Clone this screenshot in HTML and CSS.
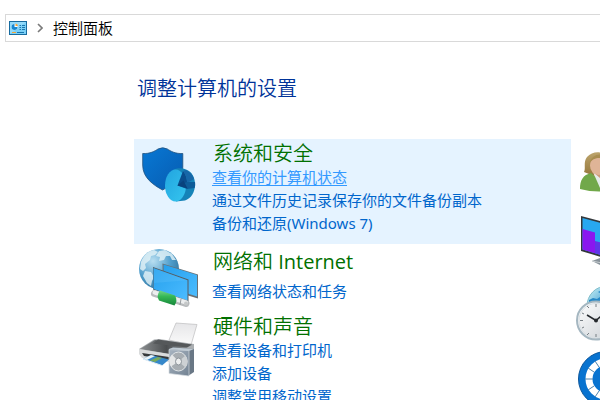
FILE: index.html
```html
<!DOCTYPE html>
<html lang="zh-CN">
<head>
<meta charset="utf-8">
<meta name="viewport" content="width=device-width, initial-scale=1">
<title>控制面板</title>
<link rel="stylesheet" href="styles.css">
</head>
<body>
<nav class="address-bar">
  <svg class="address-icon" viewBox="0 0 18 14" aria-hidden="true">
    <rect x=".5" y=".5" width="17" height="13" fill="#7bd0f7" stroke="#176b9f"/>
    <path d="M1 13V1h16z" fill="#a3e1fc" opacity=".6"/>
    <circle cx="5.500" cy="6" r="3" fill="#fff"/>
    <path d="M5.500 3v3h3a3 3 0 1 1-3-3z" fill="#1687d0"/>
    <path d="M6.500 5V2.500A3 3 0 0 1 9 5z" fill="#f3a536"/>
    <path d="M10.500 4.500H12M13 4.500h3M10.500 6.500H12M13 6.500h3M10.500 8.500H12M13 8.500h3" stroke="#1976ae"/>
    <path d="M3 11.500h4" stroke="#f3a536"/>
    <path d="M8 11.500h7" stroke="#1976ae"/>
  </svg>
  <svg class="chevron" viewBox="0 0 6 10" aria-hidden="true"><path d="M1 1l4 4-4 4" fill="none" stroke="#7a7a7a" stroke-width="1.600"/></svg>
  <span>控制面板</span>
</nav>
<main class="panel">
  <h1 class="title">调整计算机的设置</h1>
  <div class="columns">
    <div class="primary">
      <section class="category is-active">
        <svg class="icon" viewBox="0 0 64 64" aria-hidden="true">
          <defs>
            <linearGradient id="shield" x1="0" y1="0" x2="1" y2="1"><stop offset="0" stop-color="#0878d4"/><stop offset="1" stop-color="#075bb0"/></linearGradient>
            <linearGradient id="pie" x1="0" y1="0" x2="1" y2="1"><stop offset="0" stop-color="#22a4df"/><stop offset="1" stop-color="#35c5ef"/></linearGradient>
          </defs>
          <path d="M4.700 10.500C12 11 17 8 20 6q4.700-2.500 9.400 0c3 2 8 5 15.400 4.500V24c0 12-11 18-20.200 23C15.500 42 4.700 35 4.700 22z" fill="url(#shield)" stroke="#23527c" stroke-width=".8"/>
          <path d="M36 26.500c4-2 9-1.500 12 0 6 2 9 8 9 15 0 8-4 14-10 16l-9 1z" fill="#1583b8"/>
          <ellipse cx="37.500" cy="42.500" rx="10.500" ry="16" fill="url(#pie)"/>
          <path d="M39.500 42.500L45 28c2 2 3.500 6 4 10l.5 6z" fill="#0a4d8c"/>
          <path d="M45 28l3-1c4 2 7 5 8 9l-7 4c0-4-1-8-4-12z" fill="#1767a8"/>
          <path d="M39.500 42.500L49 39l8 0c.5 3 0 5-.5 6L49 46z" fill="#0d5c99"/>
          <path d="M39.500 42.500l6-5 4 8z" fill="#08427d"/>
        </svg>
        <div class="category-text">
          <h2>系统和安全</h2>
          <ul>
            <li><a class="hovered" href="#status">查看你的计算机状态</a></li>
            <li><a href="#history">通过文件历史记录保存你的文件备份副本</a></li>
            <li><a href="#backup">备份和还原(Windows 7)</a></li>
          </ul>
        </div>
      </section>
      <section class="category network">
        <svg class="icon" viewBox="0 0 64 64" aria-hidden="true">
          <defs>
            <radialGradient id="globe" cx=".35" cy=".3" r=".75"><stop offset="0" stop-color="#b9dff1"/><stop offset=".6" stop-color="#4f9dcb"/><stop offset="1" stop-color="#34769f"/></radialGradient>
            <linearGradient id="screen" x1="0" y1="0" x2="1" y2="1"><stop offset="0" stop-color="#26a0ed"/><stop offset="1" stop-color="#4bbcff"/></linearGradient>
            <linearGradient id="pipe" x1="0" y1="0" x2="0" y2="1"><stop offset="0" stop-color="#72d48a"/><stop offset=".4" stop-color="#36b855"/><stop offset="1" stop-color="#16863a"/></linearGradient>
          </defs>
          <circle cx="21" cy="23" r="20" fill="url(#globe)"/>
          <path d="M3 16C6 9 10 5 16 4l4 2-3 3-4 1-1 4-5 4 1 4-3 3-3-2zM21 5l6-1 7 4 4 6-4 0-2-4-4 0-2 4-5 1 1-4-4-1zM7 25l6 1 3 5-2 4-1 5-4-3-4-7z" fill="#e2f1f6" opacity=".82"/>
          <path d="M24.500 17.500L60 28.500v24l-10-3-25-8z" fill="#6a7175"/>
          <path d="M25.500 18.500l33.500 10.500v21.500L26 40z" fill="url(#screen)"/>
          <path d="M15 21l35.500 12.500v22.500L15 43.500z" fill="#565c60"/>
          <path d="M15.500 22l34 12.200v20.300L15.500 43z" fill="url(#screen)"/>
          <path d="M15.500 22l34 12.200L16 37z" fill="#6bc7fa" opacity=".25"/>
          <path d="M16.500 47.500L48 57.500" stroke="#b8bbbd" stroke-width="7" stroke-linecap="round"/>
          <path d="M16.500 46.500L48 56.500" stroke="#eceeef" stroke-width="4" stroke-linecap="round"/>
          <path d="M22 44.500l15 5q3 5-.5 10L21 54.500q-3-5 1-10z" fill="url(#pipe)"/>
          <path d="M43 53l-1 6" stroke="#969b9e"/>
          <circle cx="48" cy="57.500" r="2" fill="#c5c8c9"/>
        </svg>
        <div class="category-text">
          <h2>网络和 <span class="latin">Internet</span></h2>
          <ul>
            <li><a href="#network">查看网络状态和任务</a></li>
          </ul>
        </div>
      </section>
      <section class="category">
        <svg class="icon" viewBox="0 2 64 64" aria-hidden="true">
          <defs>
            <linearGradient id="paper" x1="0" y1="0" x2="0" y2="1"><stop offset="0" stop-color="#e6e6e8"/><stop offset="1" stop-color="#fafafa"/></linearGradient>
            <linearGradient id="printer" x1="0" y1="0" x2="1" y2="0"><stop offset="0" stop-color="#8b8e90"/><stop offset=".5" stop-color="#4b4e50"/><stop offset="1" stop-color="#a1a5a8"/></linearGradient>
            <linearGradient id="speaker" x1="0" y1="0" x2="1" y2="1"><stop offset="0" stop-color="#a7b4c1"/><stop offset="1" stop-color="#738292"/></linearGradient>
          </defs>
          <path d="M38 9l21 1.500L53 31 31 26z" fill="url(#paper)" stroke="#bdbdbf" stroke-width=".7"/>
          <path d="M1 35L16 25.500l5-.5L56 30v5L31 43 1 39z" fill="#abafb2"/>
          <path d="M2 35l15-9 38 5-23 9z" fill="url(#printer)"/>
          <path d="M15 29.500l5-4 34 5-5 3z" fill="#55585a"/>
          <path d="M1 35l30 5V48l-27-4-3-4z" fill="#d9dbdc"/>
          <path d="M4 39l27 4V46L6 42z" fill="#35393b"/>
          <path d="M5 45l8-4 18 4.500-7 6z" fill="#3688ca"/>
          <path d="M5 45l8-4 4 1-8 4z" fill="#ebf4f8"/>
          <path d="M12 46.500l8-3.500 4 1-7 4z" fill="#79aa5c"/>
          <path d="M5 45l19 6.500" stroke="#e0edf5"/>
          <path d="M31 35l4-1.500L56 35v23l-6 4z" fill="#697785"/>
          <path d="M31 35.500l20 1V62l-20-2.500z" fill="url(#speaker)" stroke="#d8dee3" stroke-width=".7"/>
          <path d="M31 35l4-1.500L56 35l-5 2z" fill="#c0cbd4"/>
          <ellipse cx="40.500" cy="47.500" rx="8.500" ry="9.500" fill="#a7adb2" stroke="#e1e5e7"/>
          <path d="M40.500 47.500L34 40.500a9 9 0 0 0-1 12z" fill="#e4e6e7"/>
          <path d="M40.500 47.500l7-6a9 9 0 0 1 0 12z" fill="#cdd1d4"/>
          <ellipse cx="40.500" cy="47.500" rx="3" ry="3.500" fill="#eceeef" stroke="#8c9399"/>
        </svg>
        <div class="category-text">
          <h2>硬件和声音</h2>
          <ul>
            <li><a href="#devices">查看设备和打印机</a></li>
            <li><a href="#add-device">添加设备</a></li>
            <li><a href="#mobility">调整常用移动设置</a></li>
          </ul>
        </div>
      </section>
    </div>
    <div class="secondary">
      <svg class="icon" viewBox="0 0 64 64" aria-hidden="true">
        <defs><linearGradient id="hair" x1="0" y1="0" x2="0" y2="1"><stop offset="0" stop-color="#bca46c"/><stop offset="1" stop-color="#927338"/></linearGradient></defs>
        <path d="M9 29c2-4-1-10 3-15C17 8 26 8 31 12c6 5 3 13 7 17L24 35z" fill="url(#hair)"/>
        <path d="M19 27h12v11H19z" fill="#cc9a7b"/>
        <path d="M5 46c0-9 3-14 11-16l9 8 7-8c9 2 11 8 11 16q-19 5-38 0z" fill="#71a84a"/>
        <path d="M18 29l7 16 6-15-6 5z" fill="#e4ece9"/>
        <ellipse cx="23.500" cy="22.500" rx="8.500" ry="9.500" fill="#dfb497"/>
        <path d="M14 22c2-6 7-7 10-7h8c-4-6-16-5-18 7z" fill="#a98d50"/>
      </svg>
      <svg class="icon" viewBox="0 0 64 64" aria-hidden="true">
        <path d="M6 5l54 14v37L6 40z" fill="#34383c"/>
        <path d="M7.500 7L58 20.500v33L7.500 38.500z" fill="#28a8f0"/>
        <path d="M7.500 18L20 21.500v20.700L7.500 38.500z" fill="#8a17ef"/>
        <path d="M20 30l20 5v13L20 42.200z" fill="#6037e8"/>
        <path d="M17 50l8-3 20 6v4l-18-2z" fill="#89939b"/>
        <path d="M17 50l10 2 15 5" fill="none" stroke="#c8cdd0"/>
      </svg>
      <svg class="icon" viewBox="0 0 64 64" aria-hidden="true">
        <defs>
          <radialGradient id="earth"><stop offset="0" stop-color="#3798d2"/><stop offset="1" stop-color="#a8ddec"/></radialGradient>
          <linearGradient id="dial" x1="0" y1="0" x2="1" y2="1"><stop offset="0" stop-color="#fff"/><stop offset="1" stop-color="#cbd0d5"/></linearGradient>
        </defs>
        <circle cx="32" cy="27" r="20" fill="url(#earth)" stroke="#83becb"/>
        <path d="M14 21l4-2 4 1 3-2v6H14zM23 13l4-2v4z" fill="#2689c7"/>
        <circle cx="21" cy="41.500" r="19" fill="url(#dial)" stroke="#a5b7c1" stroke-width="2"/>
        <circle cx="21" cy="41.500" r="17" fill="none" stroke="#d9e0e4"/>
        <path d="M5 41.500h3M7 34l2 1M7 49l2-1M12 27l2 2M12 56l2-2M21 25v3M21 55v3" stroke="#777e84"/>
        <path d="M12 36l9 5.500 8-7" fill="none" stroke="#25292d" stroke-width="1.500"/>
        <circle cx="21" cy="41.500" r="2" fill="#25292d"/>
      </svg>
      <svg class="icon" viewBox="0 0 64 64" aria-hidden="true">
        <circle cx="31" cy="32" r="27.500" fill="#0873d0" stroke="#0b559a"/>
        <circle cx="31" cy="32" r="17" fill="none" stroke="#fff" stroke-width="7"/>
        <path d="M10 32h8M13 21l6 4M13 43l6-4M20 14l4 6M20 50l4-6M31 11v7M31 46v7" stroke="#4c82ad"/>
      </svg>
    </div>
  </div>
</main>
</body>
</html>
```

FILE: styles.css
```css
* {
  box-sizing: border-box;
}

body {
  margin: 0;
  height: 100vh;
  overflow: hidden;
  background: #fff;
  color: #000;
  font: 350 15px/23px "Noto Sans", "Noto Sans CJK SC", sans-serif;
}

h1,
h2,
ul {
  margin: 0;
  padding: 0;
  font-weight: 350;
}

ul {
  font-weight: 400;
  list-style: none;
}

svg {
  display: block;
  flex: none;
}

.address-bar {
  display: flex;
  align-items: center;
  margin: 14px 0 0 5px;
  height: 28px;
  padding-left: 3px;
  border: 1px solid #d9d9d9;
  border-right: 0;
}

.address-icon {
  width: 18px;
  height: 14px;
}

.chevron {
  width: 6px;
  height: 10px;
  margin: 0 10px;
}

.panel {
  padding-left: 134px;
}

.title {
  padding: 33px 0 36px 3px;
  color: #003399;
  font-size: 20px;
  line-height: 28px;
}

.columns {
  display: grid;
  grid-template-columns: minmax(0, 1fr) 29px;
}

.category {
  display: flex;
  gap: 10px;
  padding: 3px 4px 9px;
}

.category .icon {
  margin-top: 1px;
}

.is-active {
  background: #e5f3ff;
}

.network {
  padding-top: 6px;
  padding-bottom: 2px;
}

.network .icon {
  margin-top: -4px;
}

.network .category-text {
  display: grid;
  align-content: start;
  gap: 6px;
}

.icon {
  width: 64px;
  height: 64px;
}

h2 {
  padding-left: 1px;
  color: #007000;
  font-size: 20px;
  line-height: 24px;
}

.latin {
  font-family: "Open Sans", "Noto Sans", sans-serif;
  font-weight: 400;
}

a {
  color: #0066cc;
  text-decoration: none;
}

a:hover,
.hovered {
  color: #3399ff;
  text-decoration: underline;
  text-underline-offset: 2px;
}

.secondary {
  display: grid;
  align-content: start;
  gap: 4px;
  padding: 4px 0 0 4px;
  overflow: hidden;
}
```
